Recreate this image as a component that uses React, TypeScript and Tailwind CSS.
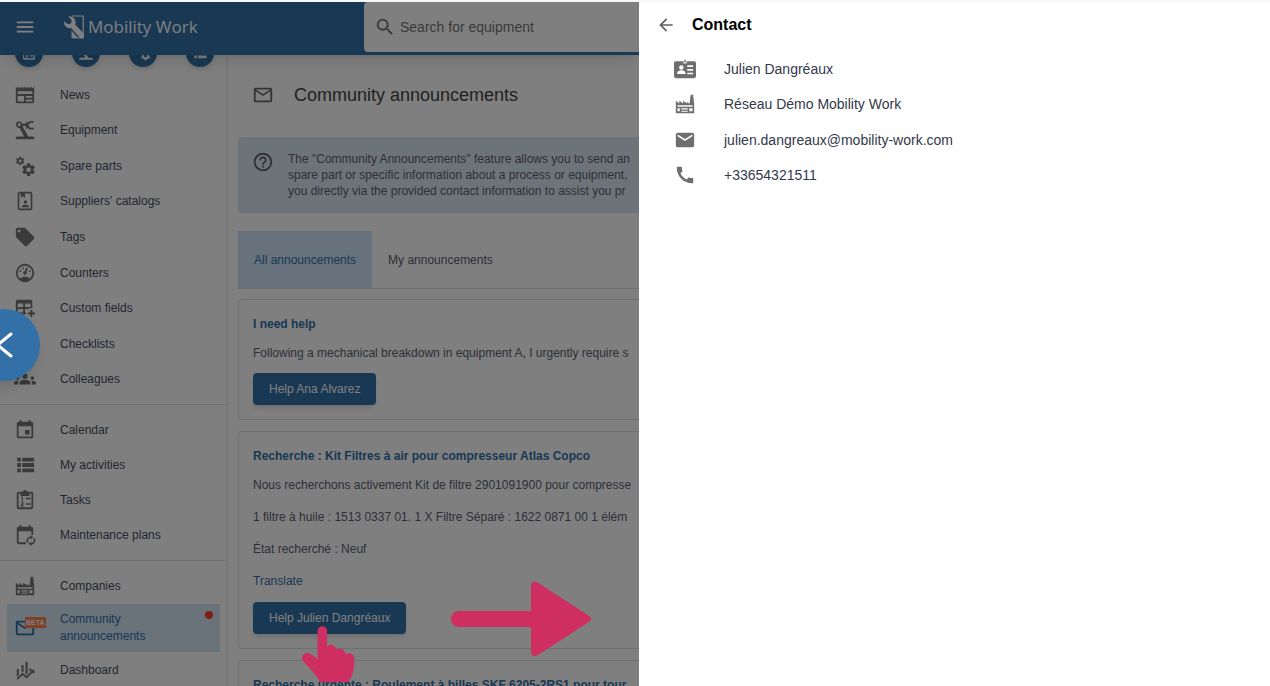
import type { ReactNode } from "react";
import {
    MdArrowBack,
    MdCall,
    MdChecklist,
    MdEmail,
    MdEvent,
    MdGroups,
    MdHelpOutline,
    MdLocalOffer,
    MdMenu,
    MdNewspaper,
    MdOutlineEmail,
    MdSearch,
} from "react-icons/md";

type IconProps = { className?: string };

const Svg = ({ className, children }: IconProps & { children: ReactNode }) => (
    <svg className={className} viewBox="0 0 24 24" fill="currentColor" aria-hidden="true">
        {children}
    </svg>
);

const RobotArmIcon = ({ className }: IconProps) => (
    <Svg className={className}>
        <path d="M2 22v-1.500c0-.8.7-1.500 1.500-1.500H11L6.200 9.700A3.500 3.500 0 1 1 9 5.200h4V3h1.700V4.500L17 2.200h4.500V4H18l-2 2v1.600l2 2h3.500v1.800H17l-2.300-2.300v1.500H13V7.500H9.200L15.500 19h5c.8 0 1.500.7 1.500 1.500V22zM5.700 4.700a1.600 1.600 0 1 0 0 3.200 1.600 1.600 0 0 0 0-3.200z" />
    </Svg>
);

const CogsIcon = ({ className }: IconProps) => (
    <Svg className={className}>
        <path d="M15.9 18.45a2.45 2.45 0 1 0 0-4.9 2.45 2.45 0 0 0 0 4.9M21.1 16.68L22.58 17.84C22.71 17.95 22.75 18.13 22.66 18.29L21.26 20.71C21.17 20.86 21 20.92 20.83 20.86L19.09 20.16C18.73 20.44 18.33 20.67 17.91 20.85L17.64 22.7C17.62 22.87 17.47 23 17.3 23H14.5C14.32 23 14.18 22.87 14.15 22.7L13.89 20.85C13.46 20.67 13.07 20.44 12.71 20.16L10.96 20.86C10.81 20.92 10.62 20.86 10.54 20.71L9.14 18.29C9.05 18.13 9.09 17.95 9.22 17.84L10.7 16.68L10.65 16L10.7 15.31L9.22 14.16C9.09 14.05 9.05 13.86 9.14 13.71L10.54 11.29C10.62 11.13 10.81 11.07 10.96 11.13L12.71 11.84C13.07 11.56 13.46 11.32 13.89 11.15L14.15 9.29C14.18 9.13 14.32 9 14.5 9H17.3C17.47 9 17.62 9.13 17.64 9.29L17.91 11.15C18.33 11.32 18.73 11.56 19.09 11.84L20.83 11.13C21 11.07 21.17 11.13 21.26 11.29L22.66 13.71C22.75 13.86 22.71 14.05 22.58 14.16L21.1 15.31L21.15 16L21.1 16.68M6.69 8.07a1.57 1.57 0 1 0 0-3.15 1.57 1.57 0 0 0 0 3.15M10.03 6.94L11 7.68C11.07 7.75 11.09 7.87 11.03 7.97L10.13 9.53C10.08 9.63 9.96 9.67 9.86 9.63L8.74 9.18L8 9.62L7.81 10.81C7.79 10.92 7.7 11 7.59 11H5.79C5.67 11 5.58 10.92 5.56 10.81L5.4 9.62L4.64 9.18L3.5 9.63C3.41 9.67 3.3 9.63 3.24 9.53L2.34 7.97C2.28 7.87 2.31 7.75 2.39 7.68L3.34 6.94L3.31 6.5L3.34 6.06L2.39 5.32C2.31 5.25 2.28 5.13 2.34 5.03L3.24 3.47C3.3 3.37 3.41 3.33 3.5 3.37L4.63 3.82L5.4 3.38L5.56 2.19C5.58 2.08 5.67 2 5.79 2H7.59C7.7 2 7.79 2.08 7.81 2.19L8 3.38L8.74 3.82L9.86 3.37C9.96 3.33 10.08 3.37 10.13 3.47L11.03 5.03C11.09 5.13 11.07 5.25 11 5.32L10.03 6.06L10.06 6.5L10.03 6.94Z" />
    </Svg>
);

const CatalogIcon = ({ className }: IconProps) => (
    <Svg className={className}>
        <rect x="4.900" y="2.900" width="14.200" height="18.200" rx="1.200" fill="none" stroke="currentColor" strokeWidth="1.800" />
        <path d="M7.500 3h4.500v5.500L9.700 6.800 7.500 8.500zM12.500 11.200a1.900 1.900 0 1 1 0 3.800 1.900 1.900 0 0 1 0-3.800zM8.500 18.800c0-1.900 2-2.700 4-2.700s4 .8 4 2.700z" />
    </Svg>
);

const GaugeIcon = ({ className }: IconProps) => (
    <Svg className={className}>
        <path d="M17.300 18C19 16.500 20 14.400 20 12A8 8 0 0 0 4 12C4 14.400 5 16.500 6.700 18C8.200 16.700 10 16 12 16C14 16 15.900 16.700 17.300 18M12 2A10 10 0 0 1 12 22A10 10 0 0 1 12 2M7 9A1 1 0 0 1 7 11A1 1 0 0 1 7 9M10 6A1 1 0 0 1 10 8A1 1 0 0 1 10 6M17 9A1 1 0 0 1 17 11A1 1 0 0 1 17 9M14.400 6.100C14.900 6.300 15.100 6.900 15 7.400L13.600 10.800C13.800 11.100 14 11.500 14 12A2 2 0 0 1 10 12C10 11 10.700 10.100 11.700 10L13.100 6.700C13.300 6.100 13.900 5.900 14.400 6.100Z" />
    </Svg>
);

const TablePlusIcon = ({ className }: IconProps) => (
    <Svg className={className}>
        <path d="M18 14h2v3h3v2h-3v3h-2v-3h-3v-2h3v-3M4 3h14a2 2 0 0 1 2 2v7.080a6 6 0 0 0-4.320.920H12v4h1.080c-.110.680-.110 1.350 0 2H4a2 2 0 0 1-2-2V5a2 2 0 0 1 2-2m0 4v4h6V7H4m8 0v4h6V7h-6m-8 6v4h6v-4H4z" />
    </Svg>
);

const ListIcon = ({ className }: IconProps) => (
    <Svg className={className}>
        <path d="M3.500 4h4v4.300h-4zM3.500 9.800h4v4.300h-4zM3.500 15.700h4V20h-4zM9 4h13v4.300H9zM9 9.800h13v4.300H9zM9 15.700h13V20H9z" />
    </Svg>
);

const TasksIcon = ({ className }: IconProps) => (
    <Svg className={className}>
        <path d="M19 3h-4.200a3 3 0 0 0-5.600 0H5a2 2 0 0 0-2 2v15c0 1.100.9 2 2 2h14a2 2 0 0 0 2-2V5a2 2 0 0 0-2-2zm0 17H5V5h2v2.500h10V5h2zM13 9.500h5v1.700h-5zM13 15.500h5v1.700h-5zM8 8.500h1.700v5H8.400v-3.700H7.500zM7.300 14.500h3.200v2.200l-1.700 1.200h1.700V19H7.300v-1.700l1.900-1.300v-.4H7.300z" />
    </Svg>
);

const CalendarSyncIcon = ({ className }: IconProps) => (
    <Svg className={className}>
        <path d="M16 1v2H8V1H6v2H5a2 2 0 0 0-2 2v15c0 1.100.9 2 2 2h8v-2H5V8h14v4h2V5a2 2 0 0 0-2-2h-1V1z" />
        <path d="M15.200 20.500a3.800 3.800 0 0 1 3.600-6M21.700 15.700a3.800 3.800 0 0 1-3.500 6" fill="none" stroke="currentColor" strokeWidth="1.700" />
        <path d="M18.200 12v5l2.800-2.500zM18.800 24v-5L16 21.500z" />
    </Svg>
);

const FactoryIcon = ({ className }: IconProps) => (
    <Svg className={className}>
        <path d="M2 22V8.500l3.800 3V8.500l4.200 3V8.500l4.300 3V9.800l2.700 1.900L18.200 2h2.600L22 12v10zm1.800-7h16.400v-1.600H3.800zm0 1.600V20h2.500v-3.400zm4.200 0V18h7v-1.400zm8.700 0V20h3.500v-3.400zM8 19.400v1h7v-1z" fillRule="evenodd" />
    </Svg>
);

const DashboardIcon = ({ className }: IconProps) => (
    <Svg className={className}>
        <path d="M3 11h2.300v6.500L3 19.500zM8.200 6.500h2.300v8L9.400 13.400l-1.200 1.200zM12.600 3h2.300v13l-1.100 1-1.200-1zM16.800 10h1.900v2.500l-1.900 1.800z" />
        <path d="M3.400 22l6.100-5.800 4.200 3.600 6.600-6.400" fill="none" stroke="currentColor" strokeWidth="2" />
        <path d="M17.300 11.700h5v5z" />
    </Svg>
);

const IdCardIcon = ({ className }: IconProps) => (
    <Svg className={className}>
        <path fillRule="evenodd" d="M2 3.500h8.300V6h3.400V3.500H22a2 2 0 0 1 2 2V20a2 2 0 0 1-2 2H2a2 2 0 0 1-2-2V5.500a2 2 0 0 1 2-2zM8 8a2.400 2.400 0 1 0 0 4.800A2.400 2.400 0 0 0 8 8zm-4.500 9.500h9v-1.200c0-1.900-2.500-3-4.500-3s-4.500 1.100-4.500 3zM14.500 8v1.800h6.300V8zm0 4v1.800h6.300V12zm0 4v1.800h6.300V16z" />
        <path d="M11.200 2h1.600v3h-1.600z" />
    </Svg>
);

const LogoMark = () => (
    <svg className="h-6 w-5" viewBox="0 0 20 24" aria-hidden="true">
        <path d="M8 1h11.200v22H8.500" fill="none" stroke="#fff" strokeWidth="1.200" />
        <path d="M7.500 15.500L14 23H7.500z" fill="#fff" />
        <path
            d="M.3 6.600C-.4 9.700 1.700 12.900 5 13.200c.8.100 1.500 0 2-.2L16 23h3c.5 0 .8-.3.8-.8v-3.700L11.300 9.700C12.600 5.500 10 1.400 5.700 1.300c-.5 0-.9 0-1.300.1l3.400 3.900-.7 3-2.900.9z"
            fill="#fff"
        />
    </svg>
);

type NavItem = { label: string; icon: (p: IconProps) => ReactNode };

const assets: NavItem[] = [
    { label: "News", icon: MdNewspaper },
    { label: "Equipment", icon: RobotArmIcon },
    { label: "Spare parts", icon: CogsIcon },
    { label: "Suppliers' catalogs", icon: CatalogIcon },
    { label: "Tags", icon: MdLocalOffer },
    { label: "Counters", icon: GaugeIcon },
    { label: "Custom fields", icon: TablePlusIcon },
    { label: "Checklists", icon: MdChecklist },
    { label: "Colleagues", icon: MdGroups },
];

const planning: NavItem[] = [
    { label: "Calendar", icon: MdEvent },
    { label: "My activities", icon: ListIcon },
    { label: "Tasks", icon: TasksIcon },
    { label: "Maintenance plans", icon: CalendarSyncIcon },
];

const shortcuts: NavItem[] = [
    { label: "Add activity", icon: TasksIcon },
    { label: "Add equipment", icon: RobotArmIcon },
    { label: "Add spare part", icon: CogsIcon },
    { label: "Add list", icon: ListIcon },
];

const NavLink = ({ label, icon: Icon }: NavItem) => (
    <a href="#" className="flex h-full items-center gap-6 pl-3.5">
        <Icon className="size-[22px] shrink-0 text-[#757575]" />
        <span>{label}</span>
    </a>
);

const Card = ({ title, children }: { title: string; children: ReactNode }) => (
    <article className="rounded-l-sm border border-r-0 border-[#dcdfea] pt-4 pb-3.5 pl-3.5">
        <h2 className="leading-4 font-bold text-[#3370a8]">{title}</h2>
        {children}
    </article>
);

const HelpButton = ({ name }: { name: string }) => (
    <button type="button" className="block h-8 rounded-sm bg-[#3370a8] px-4 text-white shadow-md">
        Help {name}
    </button>
);

const Header = () => (
    <header className="relative z-10 flex h-[53px] shrink-0 items-center bg-[#3370a8] pb-[3px] pl-3.5 text-white shadow-lg">
        <button type="button" aria-label="Menu">
            <MdMenu className="size-[22px]" />
        </button>
        <a href="#" className="ml-7 flex w-[300px] shrink-0 items-center gap-1 font-['Open_Sans',sans-serif] text-[17px] font-medium">
            <LogoMark />
            <span>Mobility Work</span>
        </a>
        <label className="flex h-[50px] flex-1 items-center gap-1 self-start rounded-l-sm bg-white pl-2.5 text-[#757575]">
            <MdSearch className="size-[22px] shrink-0" />
            <input
                type="search"
                aria-label="Search for equipment"
                placeholder="Search for equipment"
                className="w-full min-w-0 text-sm outline-none placeholder:text-[#757575]"
            />
        </label>
    </header>
);

const Sidebar = () => (
    <nav className="w-[228px] shrink-0 border-r-2 border-[#efefef] text-xs text-[#484d5e]">
        <div className="-mt-4 grid w-[228px] grid-cols-4 justify-items-center">
            {shortcuts.map(({ label, icon: Icon }) => (
                <button
                    key={label}
                    type="button"
                    aria-label={label}
                    className="flex size-7 items-center justify-center rounded-full bg-[#3370a8] text-white shadow-md"
                >
                    <Icon className="size-4" />
                </button>
            ))}
        </div>
        <ul className="mt-2.5 mb-[7px] grid h-[320px] auto-rows-fr">
            {assets.map((item) => (
                <li key={item.label}>
                    <NavLink {...item} />
                </li>
            ))}
        </ul>
        <ul className="grid h-[157px] auto-rows-fr border-y border-[#dedede] py-[7px]">
            {planning.map((item) => (
                <li key={item.label}>
                    <NavLink {...item} />
                </li>
            ))}
        </ul>
        <ul className="pt-[7px]">
            <li className="h-9">
                <NavLink label="Companies" icon={FactoryIcon} />
            </li>
            <li className="mr-1.5 ml-[7px] h-12">
                <a href="#" className="flex h-full bg-[#d5e5f4] px-[7px] text-[#3370a8]">
                    <span className="relative flex w-[46px] shrink-0 items-center">
                        <MdOutlineEmail className="size-[22px]" />
                        <span className="absolute top-[13px] left-[11px] bg-[#ff8050] px-px text-[7px] leading-[11px] font-bold text-white">
                            BETA
                        </span>
                    </span>
                    <span className="flex-1 self-center pr-8 leading-[17px]">Community announcements</span>
                    <span className="mt-[7px] size-2 shrink-0 rounded-full bg-[#ff4030]" />
                </a>
            </li>
            <li className="h-9">
                <NavLink label="Dashboard" icon={DashboardIcon} />
            </li>
        </ul>
    </nav>
);

const Announcements = () => (
    <main className="min-w-0 flex-1 pl-2.5 text-xs whitespace-nowrap text-[#5b6070]">
        <div className="flex h-20 items-center gap-5 pl-3.5 text-[#444]">
            <MdOutlineEmail className="size-[22px] text-[#6a6a6a]" />
            <h1 className="text-lg">Community announcements</h1>
        </div>
        <div className="mt-0.5 flex h-[76px] gap-3.5 rounded-l-sm bg-[#dbe8f2] pt-3.5 pl-3.5 leading-4">
            <MdHelpOutline className="size-[22px] shrink-0" />
            <p>
                The "Community Announcements" feature allows you to send an
                <br />
                spare part or specific information about a process or equipment,
                <br />
                you directly via the provided contact information to assist you pr
            </p>
        </div>
        <div className="mt-[18px] flex h-[58px] border-b border-[#dde3e8]">
            <button type="button" className="bg-[#cfe5f8] px-4 text-[#3370a8]">
                All announcements
            </button>
            <button type="button" className="px-4">
                My announcements
            </button>
        </div>
        <div className="mt-2.5 space-y-[11px]">
            <Card title="I need help">
                <p className="mt-3 mb-[11px] leading-[18px]">
                    Following a mechanical breakdown in equipment A, I urgently require s
                </p>
                <HelpButton name="Ana Alvarez" />
            </Card>
            <Card title="Recherche : Kit Filtres à air pour compresseur Atlas Copco">
                <div className="my-3 space-y-3.5 leading-[18px]">
                    <p>Nous recherchons activement Kit de filtre 2901091900 pour compresse</p>
                    <p>1 filtre à huile : 1513 0337 01. 1 X Filtre Séparé : 1622 0871 00 1 élém</p>
                    <p>État recherché : Neuf</p>
                    <a href="#" className="block text-[#3370a8]">
                        Translate
                    </a>
                </div>
                <HelpButton name="Julien Dangréaux" />
            </Card>
            <Card title="Recherche urgente : Roulement à billes SKF 6205-2RS1 pour tour">
                <p className="my-3" />
            </Card>
        </div>
    </main>
);

const PointingHand = () => (
    <svg
        className="absolute top-[626px] left-[302px] h-14 w-[53px] text-[#cf2e62]"
        viewBox="0 0 53 56"
        fill="currentColor"
        aria-hidden="true"
    >
        <path d="M15.500 5a4.800 4.800 0 0 1 9.600 0v16.500c1-2.500 3-3.300 5.200-2.700 2.400.6 3.700 2.500 3.700 5 2.200-1.600 6.200-1.200 8 .8 1 1.200 1.400 2.500 1.400 3.700 2-1.200 5-1.300 6.800 0 1.400 1 2 2.600 2 4.500 0 9-.5 13-3 18.500L46.500 56H18C14.500 49 9 43.500 2.200 36.500.2 34.500-.4 32 .6 29.800c1.400-2.800 5-3.500 8-1.800l6.900 5z" />
    </svg>
);

const SlideArrow = () => (
    <svg
        className="absolute top-[581px] left-[451px] h-[76px] w-[141px] text-[#cf2e62]"
        viewBox="0 0 141 76"
        fill="currentColor"
        aria-hidden="true"
    >
        <path d="M8 30h72V5c0-4 3.500-5.500 7-3.300l51.500 33.500c2.400 1.600 2.400 3.800 0 5.400L87 74c-3.500 2.300-7 .5-7-3.300V46H8a8 8 0 0 1 0-16z" />
    </svg>
);

const contact = [
    { text: "Julien Dangréaux", icon: IdCardIcon },
    { text: "Réseau Démo Mobility Work", icon: FactoryIcon },
    { text: "julien.dangreaux@mobility-work.com", icon: MdEmail },
    { text: "+33654321511", icon: MdCall },
];

const ContactPanel = () => (
    <aside className="w-[calc(50%-4px)] shrink-0 bg-white">
        <div className="flex h-[46px] items-center gap-4 pl-[17px] text-black">
            <button type="button" aria-label="Back" className="text-[#606060]">
                <MdArrowBack className="size-5" />
            </button>
            <h2 className="text-base font-bold">Contact</h2>
        </div>
        <ul className="mt-[3px] grid h-[142px] auto-rows-fr text-sm text-[#33384c]">
            {contact.map(({ text, icon: Icon }) => (
                <li key={text} className="flex items-center gap-7 pl-[35px]">
                    <Icon className="size-[22px] shrink-0 text-[#6e6e6e]" />
                    {text}
                </li>
            ))}
        </ul>
    </aside>
);

export default function App() {
    return (
        <div className="flex h-screen overflow-hidden border-t-2 border-[#f7f8f9] bg-white font-['Liberation_Sans',Arial,sans-serif]">
            <div className="relative -mt-0.5 flex min-w-0 flex-1 flex-col overflow-hidden pt-0.5">
                <Header />
                <div className="flex min-h-0 flex-1">
                    <Sidebar />
                    <Announcements />
                </div>
                <div className="absolute inset-x-0 top-0.5 bottom-0 z-20 bg-black/50" />
                <div className="absolute inset-0 z-30">
                    <button
                        type="button"
                        aria-label="Previous"
                        className="absolute top-[309px] -left-8 flex size-[72px] items-center justify-end rounded-full bg-[#3370a8] pr-[26px] shadow-lg"
                    >
                        <svg className="h-7 w-[18px] shrink-0" viewBox="0 0 18 28" fill="none" stroke="#fff" strokeWidth="3" strokeLinecap="round" aria-hidden="true">
                            <path d="M15 3L1.500 14 15 25" />
                        </svg>
                    </button>
                    <SlideArrow />
                    <PointingHand />
                </div>
            </div>
            <ContactPanel />
        </div>
    );
}
